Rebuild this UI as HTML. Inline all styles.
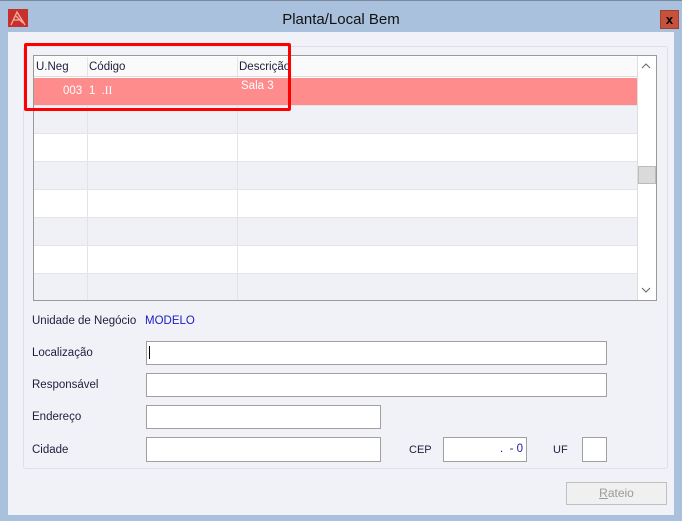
<!DOCTYPE html>
<html><head><style>
*{margin:0;padding:0;box-sizing:border-box}
body{width:682px;height:521px;background:#a9c1dc;font-family:"Liberation Sans",sans-serif;font-size:11.5px;color:#1e1e3c;position:relative;overflow:hidden}
.a{position:absolute}
.body{left:8px;top:32px;width:666px;height:483px;background:#f0f2f8}
.in{position:absolute;background:#fff;border:1px solid #a0a0a0}
.row{position:absolute;left:34px;width:603px;height:28px;border-top:1px solid #e3e3e8}
.lbl{position:absolute;font-size:11.5px;color:#1e1e3c}
</style></head><body>
<div class="a" style="left:0;top:0;width:682px;height:1px;background:#7a8aa0"></div>
<svg class="a" style="left:8px;top:9px" width="20" height="18"><rect width="20" height="18" fill="#c8302c"/><path d="M3 16 L9 3 L17 16 M6 11 L14 11 M8 7 L15 14" stroke="#f5b0a0" stroke-width="1.3" fill="none"/></svg>
<div class="a" style="left:0;top:11px;width:682px;text-align:center;font-size:15px;color:#111">Planta/Local Bem</div>
<div class="a" style="left:660px;top:10px;width:19px;height:19px;background:#c7523c;border:1px solid #a04030;color:#000;font-weight:bold;font-size:13px;text-align:center;line-height:17px">x</div>
<div class="a body"></div>
<div class="a" style="left:23px;top:46px;width:645px;height:423px;border:1px solid #dde0ea;border-radius:3px;background:#f0f2f8"></div>
<!-- grid -->
<div class="a" style="left:33px;top:55px;width:624px;height:246px;border:1px solid #999;background:#fff"></div>
<div class="a" style="left:34px;top:57px;width:603px;height:20px;background:#fafafa;border-bottom:1px solid #ddd"></div>
<div class="lbl" style="left:36px;top:61px">U.Neg</div>
<div class="lbl" style="left:89px;top:61px">Código</div>
<div class="lbl" style="left:239px;top:61px">Descrição</div>
<div class="row" style="top:105px;background:#f0f1f7"></div>
<div class="row" style="top:133px;background:#fff"></div>
<div class="row" style="top:161px;background:#f0f1f7"></div>
<div class="row" style="top:189px;background:#fff"></div>
<div class="row" style="top:217px;background:#f0f1f7"></div>
<div class="row" style="top:245px;background:#fff"></div>
<div class="row" style="top:273px;background:#f0f1f7;height:27px"></div>
<div class="a" style="left:87px;top:57px;width:1px;height:243px;background:#e3e3e8"></div>
<div class="a" style="left:237px;top:57px;width:1px;height:243px;background:#e3e3e8"></div>
<div class="a" style="left:34px;top:78px;width:603px;height:27px;background:#ff8c8c"></div>
<div class="lbl" style="left:63px;top:85px;color:#fff">003</div>
<div class="lbl" style="left:89px;top:85px;color:#fff">1&nbsp;&nbsp;<span style="font-family:'Liberation Serif',serif">.II</span></div>
<div class="lbl" style="left:241px;top:80px;color:#fff">Sala 3</div>
<div class="a" style="left:637px;top:56px;width:19px;height:244px;background:#fff;border-left:1px solid #ddd"></div>
<svg class="a" style="left:641px;top:62px" width="10" height="8"><path d="M1 6 L5 2 L9 6" stroke="#666" fill="none"/></svg>
<div class="a" style="left:638px;top:166px;width:18px;height:18px;background:#dadada;border:1px solid #bbb"></div>
<svg class="a" style="left:641px;top:286px" width="10" height="8"><path d="M1 2 L5 6 L9 2" stroke="#666" fill="none"/></svg>
<!-- red highlight -->
<div class="a" style="left:24px;top:43px;width:267px;height:68px;border:3px solid #ff0000;border-radius:2px"></div>
<!-- form -->
<div class="lbl" style="left:32px;top:315px">Unidade de Negócio</div>
<div class="lbl" style="left:145px;top:315px;color:#2020c0">MODELO</div>
<div class="lbl" style="left:32px;top:347px">Localização</div>
<div class="in" style="left:146px;top:341px;width:461px;height:24px"><div class="a" style="left:2px;top:4px;width:1px;height:13px;background:#000"></div></div>
<div class="lbl" style="left:32px;top:379px">Responsável</div>
<div class="in" style="left:146px;top:373px;width:461px;height:24px"></div>
<div class="lbl" style="left:32px;top:411px">Endereço</div>
<div class="in" style="left:146px;top:405px;width:235px;height:24px"></div>
<div class="lbl" style="left:32px;top:444px">Cidade</div>
<div class="in" style="left:146px;top:437px;width:235px;height:25px"></div>
<div class="lbl" style="left:409px;top:444px;font-size:11px">CEP</div>
<div class="in" style="left:443px;top:437px;width:84px;height:25px"><div class="a" style="right:3px;top:5px;color:#2020a0">. &nbsp;- 0</div></div>
<div class="lbl" style="left:553px;top:444px;font-size:11px">UF</div>
<div class="in" style="left:582px;top:437px;width:25px;height:25px"></div>
<div class="a" style="left:566px;top:482px;width:101px;height:23px;border:1px solid #c0c0c0;background:#f0f0f0;color:#9a9a9a;text-align:center;line-height:21px;font-size:12px"><u>R</u>ateio</div>
</body></html>
